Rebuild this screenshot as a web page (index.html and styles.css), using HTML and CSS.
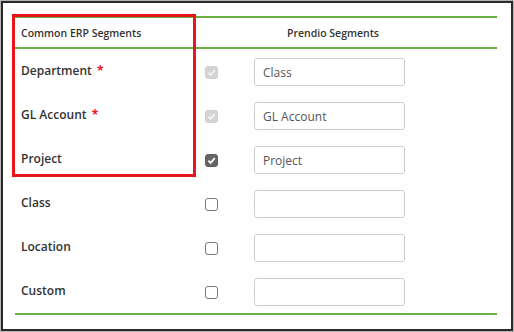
FILE: index.html
```html
<!DOCTYPE html>
<html lang="en">
<head>
    <meta charset="UTF-8">
    <title>Segment Mapping</title>
    <link rel="stylesheet" href="styles.css">
</head>
<body>
    <div class="frame">
        <div class="mapping">
            <table class="seg-table">
                <colgroup>
                    <col class="col-name">
                    <col class="col-check">
                    <col class="col-input">
                </colgroup>
                <thead>
                    <tr>
                        <th class="erp-head">Common ERP Segments</th>
                        <th class="prendio-head" colspan="2">Prendio Segments</th>
                    </tr>
                </thead>
                <tbody>
                    <tr>
                        <td class="seg-name"><span>Department <span class="req">*</span></span></td>
                        <td class="seg-check"><span class="cb cb-locked"><svg viewBox="0 0 12 12"><path d="M2.6 6.2 L5 8.6 L9.6 3.4" /></svg></span></td>
                        <td class="seg-input"><input type="text" value="Class"></td>
                    </tr>
                    <tr>
                        <td class="seg-name"><span>GL Account <span class="req">*</span></span></td>
                        <td class="seg-check"><span class="cb cb-locked"><svg viewBox="0 0 12 12"><path d="M2.6 6.2 L5 8.6 L9.6 3.4" /></svg></span></td>
                        <td class="seg-input"><input type="text" value="GL Account"></td>
                    </tr>
                    <tr>
                        <td class="seg-name"><span>Project</span></td>
                        <td class="seg-check"><span class="cb cb-on"><svg viewBox="0 0 12 12"><path d="M2.6 6.2 L5 8.6 L9.6 3.4" /></svg></span></td>
                        <td class="seg-input"><input type="text" value="Project"></td>
                    </tr>
                    <tr>
                        <td class="seg-name"><span>Class</span></td>
                        <td class="seg-check"><span class="cb"></span></td>
                        <td class="seg-input"><input type="text" value=""></td>
                    </tr>
                    <tr>
                        <td class="seg-name"><span>Location</span></td>
                        <td class="seg-check"><span class="cb"></span></td>
                        <td class="seg-input"><input type="text" value=""></td>
                    </tr>
                    <tr>
                        <td class="seg-name"><span>Custom</span></td>
                        <td class="seg-check"><span class="cb"></span></td>
                        <td class="seg-input"><input type="text" value=""></td>
                    </tr>
                </tbody>
            </table>
            <!-- highlight drawn over the required segments -->
            <div class="highlight"></div>
        </div>
    </div>
</body>
</html>
```

FILE: styles.css
```css
html, body {
    margin: 0;
    padding: 0;
    background: #ffffff;
}
body {
    padding: 1px;
    font-family: "Open Sans", "Noto Sans", sans-serif;
    color: #333;
}
.frame {
    box-sizing: border-box;
    width: 512px;
    height: 330px;
    border: 2px solid #2a2a2a;
    box-shadow: 0 0 0 1px #b5b5b5;
    padding: 13px 0 0 12px;
    overflow: hidden;
}
.mapping {
    position: relative;
    width: 482px;
}
.seg-table {
    width: 482px;
    border-collapse: collapse;
    table-layout: fixed;
}
.col-name {
    width: 180px;
}
.col-check {
    width: 59px;
}
.seg-table th {
    height: 29px;
    padding: 0;
    font-size: 10.5px;
    font-weight: 600;
    color: #333;
    border-top: 2px solid #6cb043;
    border-bottom: 2px solid #6cb043;
    vertical-align: middle;
}
.erp-head {
    text-align: left;
    padding-left: 6px !important;
}
.prendio-head {
    text-align: center;
    padding-right: 26px !important;
}
.seg-table td {
    height: 44px;
    padding: 0;
    vertical-align: middle;
}
.seg-table tbody tr:last-child td {
    border-bottom: 2px solid #6cb043;
}
.seg-name {
    padding-left: 6px !important;
    font-size: 12px;
    font-weight: 600;
    color: #333;
}
.seg-name > span {
    position: relative;
    top: -1px;
}
.req {
    color: #e8161c;
    font-weight: 700;
    margin-left: 2px;
}
.seg-check {
    padding-left: 10px !important;
}
.cb {
    display: block;
    width: 11px;
    height: 11px;
    border: 1px solid #7a7a7a;
    border-radius: 3px;
    background: #fff;
    margin-top: 2px;
}
.cb svg {
    display: block;
    width: 11px;
    height: 11px;
    fill: none;
    stroke: #fff;
    stroke-width: 1.9;
}
.cb-on {
    background: #666;
    border-color: #5c5c5c;
}
.cb-locked {
    background: #d4d4d4;
    border-color: #cfcfcf;
}
.cb-locked svg {
    stroke: #f2f2f2;
}
.seg-input input {
    display: block;
    width: 151px;
    height: 28px;
    box-sizing: border-box;
    border: 1px solid #cfcfcf;
    border-radius: 3px;
    padding: 0 0 0 8px;
    margin: 2px 0 0 0;
    font-family: "Open Sans", "Noto Sans", sans-serif;
    font-size: 12px;
    color: #555;
    background: #fff;
}
.highlight {
    position: absolute;
    left: -3px;
    top: -2px;
    width: 178px;
    height: 157px;
    border: 3px solid #e8161c;
}
```
